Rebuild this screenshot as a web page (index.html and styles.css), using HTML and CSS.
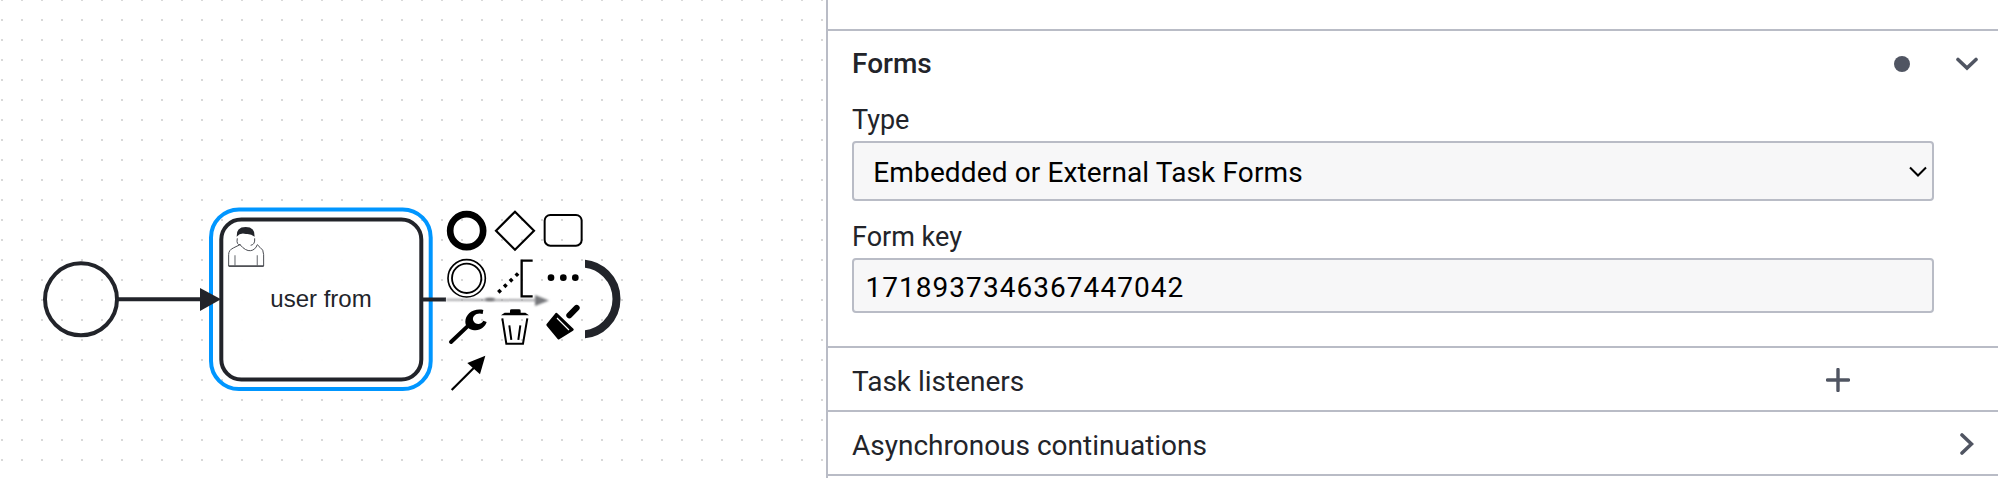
FILE: index.html
```html
<!DOCTYPE html>
<html lang="en">
<head>
<meta charset="utf-8">
<title>Forms</title>
<link rel="stylesheet" href="styles.css">
</head>
<body>
<div class="app">
  <div class="canvas">
    <svg class="diagram" width="826" height="478" viewBox="0 0 826 478">
      <defs>
        <filter id="soft" x="-20%" y="-300%" width="140%" height="700%"><feGaussianBlur stdDeviation="0.8"/></filter>
        <clipPath id="arcclip"><rect x="585" y="250" width="50" height="100"/></clipPath>
      </defs>
      <!-- selection outline -->
      <rect class="sel" x="211" y="209.5" width="219.7" height="179.5" rx="28"/>
      <!-- task -->
      <rect class="b4 task" x="221.3" y="219.5" width="200" height="160" rx="20"/>
      <text class="label" x="321" y="307" text-anchor="middle">user from</text>
      <!-- start event and incoming flow -->
      <circle class="b4" cx="81" cy="299.3" r="36"/>
      <line class="b4" x1="117" y1="299.3" x2="204" y2="299.3"/>
      <polygon class="ink" points="200,288 221,299.3 200,311"/>
      <!-- user icon -->
      <g transform="translate(0 170) scale(0.3333)">
        <path class="u-body" d="M686 288V254Q686 240 700 234L720 224Q737 244 752 242Q766 240 772 224L780 232Q791 238 791 254V288Z"/>
        <path class="u-thin" d="M705 256V288M772 256V288"/>
        <line class="u-base" x1="686" y1="288.5" x2="791" y2="288.5"/>
        <path class="u-body" d="M712 205Q708 226 722 224M764 205Q766 224 752 226"/>
        <path class="ink" d="M710 200Q708 171 737 171Q766 171 764 200Q752 190 738 192Q722 186 710 200Z"/>
      </g>
      <!-- outgoing ghost connection -->
      <line class="g-start" x1="423" y1="299.5" x2="446" y2="299.5"/>
      <line class="g-line" x1="446" y1="299.7" x2="536" y2="300.3" filter="url(#soft)"/>
      <ellipse class="g-blob" cx="490" cy="299.3" rx="5" ry="1.6" filter="url(#soft)"/>
      <polygon class="g-head" points="535,295 549,300.5 535,306" filter="url(#soft)"/>
      <!-- end event behind the pad -->
      <circle class="arc" cx="581" cy="299" r="35.5" clip-path="url(#arcclip)"/>
      <!-- context pad, drawn in 3x coordinates -->
      <g transform="translate(430 190) scale(0.3333)">
        <circle class="p" cx="110" cy="122" r="49.5" stroke-width="20"/>
        <polygon class="p" points="255,65 312,122 255,179 198,122" stroke-width="6.5"/>
        <rect class="p" x="344" y="75" width="111" height="92" rx="17" stroke-width="6"/>
        <circle class="p" cx="110" cy="265" r="56" stroke-width="5"/>
        <circle class="p" cx="110" cy="265" r="44" stroke-width="5.5"/>
        <line class="p" x1="205" y1="307" x2="266" y2="249" stroke-width="11" stroke-dasharray="10 14"/>
        <path class="p" d="M308 212H275V319H308" stroke-width="7"/>
        <circle class="f" cx="363" cy="263" r="10"/>
        <circle class="f" cx="400" cy="263" r="10"/>
        <circle class="f" cx="436" cy="263" r="10"/>
        <!-- wrench -->
        <line class="p round" x1="63" y1="456" x2="118" y2="404" stroke-width="12"/>
        <path class="f" d="M160 360C130 354 106 372 106 396C106 404 110 412 118 416C144 428 164 414 170 396L160 392C152 406 136 404 130 392C124 378 142 366 158 372Z"/>
        <!-- trash -->
        <path class="f" d="M240 368V362Q240 358 245 358H267Q272 358 272 362V368H286L297 376H213L224 368Z"/>
        <path class="p" d="M217 385L229 461H279L292 385" stroke-width="6"/>
        <path class="p" d="M238 406L244 450M271 406L265 450" stroke-width="6"/>
        <!-- brush -->
        <line class="p round" x1="440" y1="354" x2="418" y2="376" stroke-width="18"/>
        <path class="f" d="M381 369L431 417Q432 420 429 422L388 448Q386 450 383 447L350 407Q348 404 350 402L377 369Q379 367 381 369Z"/>
        <line class="slit" x1="381" y1="384" x2="417" y2="420"/>
        <!-- connect -->
        <line class="p" x1="65" y1="600" x2="135" y2="530" stroke-width="6.5"/>
        <polygon class="f" points="166,497 112,519 150,553"/>
      </g>
    </svg>
  </div>
  <div class="panel">
    <div class="top-spacer"></div>
    <section class="group">
      <div class="group-head">
        <span class="title">Forms</span>
        <div class="head-icons">
          <span class="dot"></span>
          <svg class="chev-down" width="22" height="14" viewBox="0 0 22 14"><path d="M2 2.5L11 11L20 2.5"/></svg>
        </div>
      </div>
      <div class="field">
        <label class="field-label">Type</label>
        <div class="control select">
          <span class="select-text">Embedded or External Task Forms</span>
          <svg class="chev-select" width="18" height="11" viewBox="0 0 18 11"><path d="M1 1.5L9 9.5L17 1.5"/></svg>
        </div>
      </div>
      <div class="field field-key">
        <label class="field-label">Form key</label>
        <div class="control input">1718937346367447042</div>
      </div>
    </section>
    <section class="row row-listeners">
      <span class="row-label">Task listeners</span>
      <svg class="plus" width="24" height="24" viewBox="0 0 24 24"><path d="M12 1.5V22.5M1.5 12H22.5"/></svg>
    </section>
    <section class="row row-async">
      <span class="row-label">Asynchronous continuations</span>
      <svg class="chev-right" width="14" height="22" viewBox="0 0 14 22"><path d="M2 2L11.5 11L2 20"/></svg>
    </section>
  </div>
</div>
</body>
</html>
```
FILE: styles.css
```css
* { box-sizing: border-box; }
html, body { margin: 0; padding: 0; background: #fff; }
.app { display: flex; width: 1998px; height: 478px; overflow: hidden; }

.canvas {
  width: 826px;
  flex: none;
  background-color: #fff;
  background-image: radial-gradient(circle at center, #d8d8d8 0.9px, rgba(255,255,255,0) 1.2px);
  background-size: 20px 20px;
  background-position: -8px -10px;
}
.diagram { display: block; }
.b4 { fill: none; stroke: #22242a; stroke-width: 4; }
.task { fill: #fff; fill-opacity: 0.95; }
.ink { fill: #22242a; }
.sel { fill: none; stroke: #0096ff; stroke-width: 4; }
.label { font-family: "Liberation Sans", Arial, sans-serif; font-size: 24px; fill: #22242a; }
.u-body { fill: none; stroke: #4a4c52; stroke-width: 3; }
.u-thin { fill: none; stroke: #8a8c90; stroke-width: 4; }
.u-base { stroke: #22242a; stroke-width: 3; }
.g-start { stroke: #22242a; stroke-width: 4; }
.g-line { stroke: #a3a3a6; stroke-width: 2; }
.g-blob { fill: #6d6d70; }
.g-head { fill: #77787c; }
.arc { fill: none; stroke: #22242a; stroke-width: 8; }
.p { fill: none; stroke: #000; }
.p.round { stroke-linecap: round; }
.f { fill: #000; }
.slit { stroke: #fff; stroke-width: 3.5; }

.panel {
  flex: 1;
  min-width: 0;
  border-left: 2px solid #b9bcc6;
  font-family: Roboto, "Open Sans", sans-serif;
  color: #22242a;
  background: #fff;
}
.top-spacer { height: 31px; border-bottom: 2px solid #b9bcc6; }
.group { height: 317px; border-bottom: 2px solid #b9bcc6; padding: 0 64px 0 24px; }
.group-head {
  display: flex;
  align-items: center;
  justify-content: space-between;
  height: 70px;
  padding-bottom: 5px;
  margin-right: -43.5px;
}
.title { font-size: 28px; line-height: 34px; font-weight: 500; margin-top: 1px; }
.head-icons { display: flex; align-items: center; gap: 45.5px; }
.dot { width: 16px; height: 16px; border-radius: 50%; background: #505562; }
.chev-down { display: block; }
.chev-down path { fill: none; stroke: #505562; stroke-width: 3.6; stroke-linecap: round; }
.field { display: flex; flex-direction: column; }
.field-key { margin-top: 17px; }
.field-label { font-size: 27px; line-height: 34px; height: 40px; padding-top: 1.5px; }
.control { background: #f7f7f8; border: 2px solid #b9bcc6; border-radius: 4px; color: #000; }
.select {
  display: flex;
  align-items: center;
  justify-content: space-between;
  height: 60px;
  padding: 3px 5.5px 0 19.3px;
  font-size: 28px;
  letter-spacing: 0.13px;
}
.chev-select { margin-top: -3px; }
.chev-select path { fill: none; stroke: #000; stroke-width: 2; }
.input { height: 55px; line-height: 51px; padding: 2px 0 0 11.4px; font-size: 28px; letter-spacing: 1.05px; }
.row {
  display: flex;
  align-items: center;
  height: 64px;
  border-bottom: 2px solid #b9bcc6;
  padding: 4px 0 0 24px;
  font-size: 28px;
}
.row-label { display: block; }
.plus { display: block; margin-left: auto; margin-right: 148px; margin-top: -2px; }
.plus path { fill: none; stroke: #505562; stroke-width: 3.4; stroke-linecap: round; }
.row-async { justify-content: space-between; padding-right: 24.5px; }
.chev-right { margin-top: -3px; }
.chev-right path { fill: none; stroke: #505562; stroke-width: 3.6; stroke-linecap: round; }
```
